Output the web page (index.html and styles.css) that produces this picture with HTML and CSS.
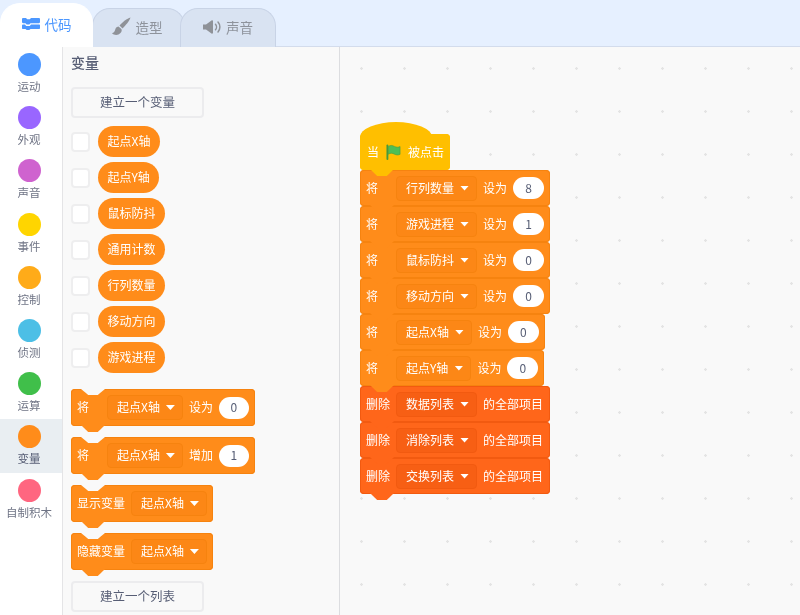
FILE: index.html
```html
<!DOCTYPE html>
<html lang="zh-CN">
<head>
<meta charset="utf-8">
<title>代码</title>
<link rel="stylesheet" href="styles.css">
</head>
<body>
<div class="app">
  <nav class="tabs">
    <div class="tab tab-active">
      <svg class="tab-icon" width="18" height="12" viewBox="0 0 18 12"><path d="M0 1.200C0 .5.5 0 1.200 0H4l1.200 1.300h2.600L9 0h7.800c.7 0 1.200.5 1.200 1.200V4c0 .7-.5 1.200-1.200 1.200H8.500L7.300 6.500H4.700L3.500 5.200H1.200C.5 5.200 0 4.700 0 4Z" fill="#4c97ff"/><path d="M0 7.500c0-.5.4-.9.900-.9H3l1.200 1.300h3.600L9 6.600h8c.6 0 1 .4 1 1v2.300c0 .6-.4 1-1 1H8.500L7.300 12H4.700L3.500 10.900H1c-.6 0-1-.4-1-1Z" fill="#4c97ff"/></svg>
      <span>代码</span>
    </div>
    <div class="tab tab-costume">
      <svg class="tab-icon" width="19" height="19" viewBox="0 0 19 19"><path d="M18.500.5C15 1.500 10.500 5 7.500 8.500l3 3C13.500 8.500 17.500 4 18.500.5Z" fill="#8f9298"/><path d="M6.500 9.500C4 9.800 3.500 11.500 3 13.300 2.600 14.800 1.500 15.800 0 16.300c2 2 6 2.500 8.500-.2 1.300-1.400 1.500-3 .9-4.100Z" fill="#8f9298"/></svg>
      <span>造型</span>
    </div>
    <div class="tab tab-sound">
      <svg class="tab-icon" width="18" height="14" viewBox="0 0 18 14"><path d="M0 4.500h3L8.500.5c.7-.5 1.500 0 1.500.7v11.600c0 .7-.8 1.200-1.500.7L3 9.500H0Z" fill="#8f9298"/><path d="M12.500 4.200c1.300 1.500 1.300 4.100 0 5.600M15 2c2.500 2.800 2.500 7.200 0 10" fill="none" stroke="#8f9298" stroke-width="1.500" stroke-linecap="round"/></svg>
      <span>声音</span>
    </div>
  </nav>
  <div class="main">
    <aside class="cats">
      <div class="cat"><i class="dot c-motion"></i><span>运动</span></div>
      <div class="cat"><i class="dot c-looks"></i><span>外观</span></div>
      <div class="cat"><i class="dot c-sound"></i><span>声音</span></div>
      <div class="cat"><i class="dot c-event"></i><span>事件</span></div>
      <div class="cat"><i class="dot c-control"></i><span>控制</span></div>
      <div class="cat"><i class="dot c-sense"></i><span>侦测</span></div>
      <div class="cat"><i class="dot c-op"></i><span>运算</span></div>
      <div class="cat cat-active"><i class="dot c-var"></i><span>变量</span></div>
      <div class="cat"><i class="dot c-my"></i><span>自制积木</span></div>
    </aside>
    <section class="flyout">
      <h2 class="fly-title">变量</h2>
      <button class="make-btn">建立一个变量</button>
      <div class="vars">
        <div class="var"><i class="check"></i><span class="pill">起点X轴</span></div>
        <div class="var"><i class="check"></i><span class="pill">起点Y轴</span></div>
        <div class="var"><i class="check"></i><span class="pill">鼠标防抖</span></div>
        <div class="var"><i class="check"></i><span class="pill">通用计数</span></div>
        <div class="var"><i class="check"></i><span class="pill">行列数量</span></div>
        <div class="var"><i class="check"></i><span class="pill">移动方向</span></div>
        <div class="var"><i class="check"></i><span class="pill">游戏进程</span></div>
      </div>
      <div class="fly-blocks">
        <div class="block notched"><span class="lbl">将</span><span class="dd">起点X轴<i class="arrow"></i></span><span>设为</span><span class="num">0</span></div>
        <div class="block notched"><span class="lbl">将</span><span class="dd">起点X轴<i class="arrow"></i></span><span>增加</span><span class="num">1</span></div>
        <div class="block notched"><span class="lbl">显示变量</span><span class="dd">起点X轴<i class="arrow"></i></span></div>
        <div class="block notched"><span class="lbl">隐藏变量</span><span class="dd">起点X轴<i class="arrow"></i></span></div>
      </div>
      <button class="make-btn make-list">建立一个列表</button>
    </section>
    <section class="workspace">
      <div class="stack">
        <div class="block hat"><span>当</span>
          <svg class="flag" width="15" height="16" viewBox="0 0 16 16"><path d="M1.500 1v14.500" stroke="#45993d" stroke-width="2" stroke-linecap="round"/><path d="M2.500 2C5 .5 7 1 9 2s4 1.200 6 .2v8.300c-2 1-4 .8-6-.2s-4-1.500-6.500 0Z" fill="#4cbf56" stroke="#45993d" stroke-width=".6"/></svg>
          <span>被点击</span></div>
        <div class="block"><span class="lbl">将</span><span class="dd">行列数量<i class="arrow"></i></span><span>设为</span><span class="num">8</span></div>
        <div class="block"><span class="lbl">将</span><span class="dd">游戏进程<i class="arrow"></i></span><span>设为</span><span class="num">1</span></div>
        <div class="block"><span class="lbl">将</span><span class="dd">鼠标防抖<i class="arrow"></i></span><span>设为</span><span class="num">0</span></div>
        <div class="block"><span class="lbl">将</span><span class="dd">移动方向<i class="arrow"></i></span><span>设为</span><span class="num">0</span></div>
        <div class="block"><span class="lbl">将</span><span class="dd">起点X轴<i class="arrow"></i></span><span>设为</span><span class="num">0</span></div>
        <div class="block"><span class="lbl">将</span><span class="dd">起点Y轴<i class="arrow"></i></span><span>设为</span><span class="num">0</span></div>
        <div class="block list"><span class="lbl">删除</span><span class="dd">数据列表<i class="arrow"></i></span><span>的全部项目</span></div>
        <div class="block list"><span class="lbl">删除</span><span class="dd">消除列表<i class="arrow"></i></span><span>的全部项目</span></div>
        <div class="block list"><span class="lbl">删除</span><span class="dd">交换列表<i class="arrow"></i></span><span>的全部项目</span></div>
      </div>
    </section>
  </div>
</div>
</body>
</html>
```
FILE: styles.css
```css
* { box-sizing: border-box; }
html, body { margin: 0; height: 100%; overflow: hidden; }
body {
  font-family: "Noto Sans CJK SC", "Noto Sans", sans-serif;
  font-size: 12px;
  background: #f9f9f9;
}
.app {
  width: 800px;
  height: 615px;
  display: flex;
  flex-direction: column;
  overflow: hidden;
  filter: blur(0.45px);
}

/* tabs */
.tabs {
  height: 47px;
  flex: none;
  display: flex;
  align-items: flex-end;
  background: #e6f0ff;
  border-bottom: 1px solid #d3dcec;
}
.tab {
  display: flex;
  align-items: center;
  justify-content: center;
  gap: 5px;
  height: 39px;
  width: 96px;
  margin-bottom: -1px;
  padding-bottom: 3px;
  font-size: 13.500px;
  color: #8e939c;
  background: #d9e3f2;
  border: 1px solid #c8d3e6;
  border-bottom: 0;
  border-radius: 18px 18px 0 0;
}
.tab-active {
  position: relative;
  z-index: 1;
  width: 93px;
  height: 44px;
  padding-bottom: 4px;
  color: #4c97ff;
  background: #fff;
  border-color: #fff;
  border-radius: 20px 20px 0 0;
}
.tab-costume { width: 93px; margin-left: -1px; padding-right: 3px; }
.tab-sound { width: 96px; margin-left: -5px; }
.tab-icon { flex: none; }

/* main */
.main { flex: 1; min-height: 0; display: flex; }

.cats {
  width: 63px;
  flex: none;
  padding-right: 4px;
  background: #fff;
  border-right: 1px solid #e4e4e6;
  box-shadow: none;
}
.cat {
  height: 53.200px;
  margin-right: -4px;
  padding-right: 4px;
  display: flex;
  flex-direction: column;
  align-items: center;
  padding-top: 6px;
  color: #6f7485;
  font-size: 11.500px;
}
.cat span { margin-top: 2px; line-height: 16px; white-space: nowrap; }
.cat-active { background: #e9eef2; color: #575e75; }
.dot {
  width: 23px;
  height: 23px;
  flex: none;
  border-radius: 50%;
}
.c-motion { background: #4c97ff; }
.c-looks { background: #9966ff; }
.c-sound { background: #cf63cf; }
.c-event { background: #ffd500; }
.c-control { background: #ffab19; }
.c-sense { background: #4cbfe6; }
.c-op { background: #40bf4a; }
.c-var { background: #ff8c1a; }
.c-my { background: #ff6680; }

/* flyout */
.flyout {
  width: 277px;
  flex: none;
  padding: 5px 0 0 8px;
  background: #f9f9f9;
  border-right: 1px solid #dcdde0;
}
.fly-title {
  margin: 0 0 15px;
  font-size: 14px;
  line-height: 20px;
  font-weight: 500;
  color: #575e75;
}
.make-btn {
  display: block;
  width: 133px;
  height: 31px;
  padding: 0 0 2px;
  font: inherit;
  font-size: 12.500px;
  color: #575e75;
  background: #f9f9f9;
  border: 2px solid #ececee;
  border-radius: 4px;
}
.make-list { margin-top: 11px; }
.vars { margin-top: 8px; display: flex; flex-direction: column; gap: 5px; }
.var { display: flex; align-items: center; gap: 8px; height: 31px; }
.check {
  width: 19px;
  height: 20px;
  flex: none;
  background: #fff;
  border: 2px solid #eeeeef;
  border-radius: 4px;
}
.pill {
  height: 31px;
  padding: 0 9.500px 2px;
  display: flex;
  align-items: center;
  color: #fff;
  background: #ff8c1a;
  border-radius: 16px;
}
.fly-blocks {
  margin-top: 16px;
  display: flex;
  flex-direction: column;
  align-items: flex-start;
  gap: 11px;
}

/* blocks */
.block {
  --c: #ff8c1a;
  --e: #f6830f;
  --d: #fc8716;
  position: relative;
  display: inline-flex;
  align-items: center;
  gap: 6px;
  height: 36px;
  padding: 0 6px;
  color: #fff;
  white-space: nowrap;
  background: var(--c);
  box-shadow: inset 0 0 0 1px var(--e);
  border-radius: 4px;
}
.block > span { padding-bottom: 2px; }
.fly-blocks .block { height: 37px; }
.block::after {
  content: "";
  position: absolute;
  z-index: 1;
  left: 10px;
  top: calc(100% - 1px);
  width: 24px;
  height: 7px;
  background: var(--c);
  clip-path: polygon(0 0, 100% 0, 82% 60%, 70% 100%, 30% 100%, 18% 60%);
}
.notched::before {
  content: "";
  position: absolute;
  left: 10px;
  top: 0;
  width: 24px;
  height: 6px;
  background: #f9f9f9;
  clip-path: polygon(0 0, 100% 0, 82% 60%, 70% 100%, 30% 100%, 18% 60%);
}
.lbl { min-width: 24px; }
.dd {
  display: flex;
  align-items: center;
  gap: 6px;
  height: 25px;
  padding: 0 7px 2px 9px;
  background: var(--d);
  border: 1px solid var(--e);
  border-radius: 4px;
}
.arrow {
  width: 9px;
  height: 5px;
  margin-top: 2px;
  background: #fff;
  clip-path: polygon(0 0, 100% 0, 50% 100%);
}
.num {
  width: 30px;
  height: 22px;
  display: flex;
  align-items: center;
  justify-content: center;
  color: #575e75;
  background: #fff;
  border-radius: 11px;
}
.stack .num { width: 31px; }
.list {
  --c: #ff661a;
  --e: #f25a10;
  --d: #f75f14;
  padding-right: 7px;
}

/* workspace */
.workspace {
  flex: 1;
  padding: 87px 0 0 20px;
  background-color: #f9f9f9;
  background-image: radial-gradient(circle at 21.500px 21.500px, #e4e4e4 0, #e4e4e4 1px, transparent 1.500px);
  background-size: 43px 43px;
}
.stack {
  display: flex;
  flex-direction: column;
  align-items: flex-start;
}
.hat {
  --c: #ffbf00;
  --e: #ffbf00;
  gap: 7px;
  padding-left: 7px;
  padding-right: 6px;
}
.hat::before {
  content: "";
  position: absolute;
  left: 0;
  top: -12px;
  width: 72px;
  height: 30px;
  background: #ffbf00;
  border-radius: 50%;
}
.hat > * { position: relative; }
.flag { flex: none; }
```
